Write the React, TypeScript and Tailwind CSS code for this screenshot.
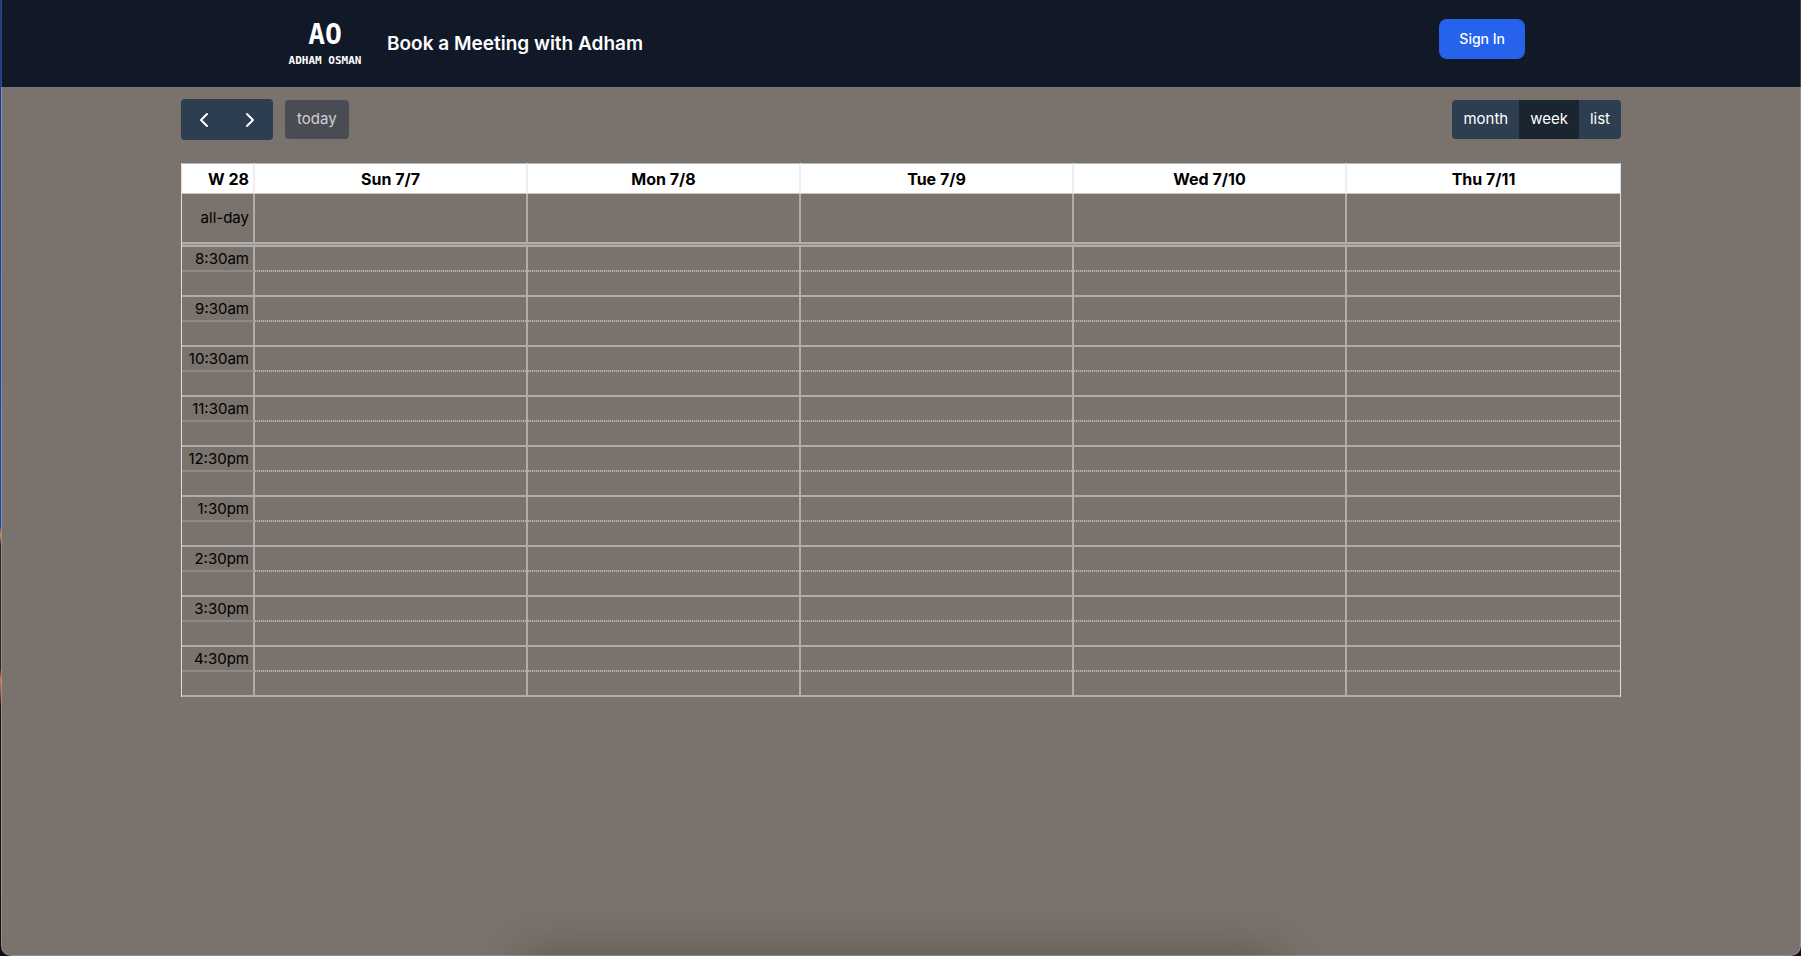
import { ChevronLeft, ChevronRight } from "lucide-react";

const days = ["Sun 7/7", "Mon 7/8", "Tue 7/9", "Wed 7/10", "Thu 7/11"];
const hours = [
  "8:30am",
  "9:30am",
  "10:30am",
  "11:30am",
  "12:30pm",
  "1:30pm",
  "2:30pm",
  "3:30pm",
  "4:30pm",
];

const dayCell = "border-r-2 border-[#b0acaa] p-0 last:border-r-0";

function Logo() {
  return (
    <a
      href="#home"
      className="flex w-[76px] flex-col items-center whitespace-nowrap font-['DejaVu_Sans_Mono',monospace] font-bold"
    >
      <span className="text-[28px] leading-[30px]">AO</span>
      <span className="mt-1 text-[11px] leading-[14px]">ADHAM OSMAN</span>
    </a>
  );
}

function Header() {
  return (
    <header className="bg-[#111827] text-white">
      <div className="mx-auto flex h-[87px] max-w-7xl items-center justify-between pl-[26px] pr-4">
        <div className="flex items-center gap-6">
          <Logo />
          <h1 className="text-[19px] font-semibold leading-7">Book a Meeting with Adham</h1>
        </div>
        <button
          type="button"
          className="mb-2.5 h-10 rounded-lg bg-[#2563eb] px-5 text-sm font-medium"
        >
          Sign In
        </button>
      </div>
    </header>
  );
}

function Toolbar() {
  return (
    <div className="flex items-center justify-between text-[15px] text-white">
      <div className="flex items-center gap-3">
        <div className="flex overflow-hidden rounded bg-[#2c3e50]">
          <button type="button" aria-label="Previous week" className="flex h-[41px] w-[46px] items-center justify-center">
            <ChevronLeft size={24} strokeWidth={2} />
          </button>
          <button type="button" aria-label="Next week" className="flex h-[41px] w-[46px] items-center justify-center">
            <ChevronRight size={24} strokeWidth={2} />
          </button>
        </div>
        <button type="button" disabled className="h-[39px] rounded bg-[#30384a] px-3 opacity-65">
          today
        </button>
      </div>
      <div className="flex overflow-hidden rounded bg-[#2c3e50]">
        <button type="button" className="h-[39px] px-[11px]">month</button>
        <button type="button" aria-pressed="true" className="h-[39px] bg-[#1a252f] px-[11px]">week</button>
        <button type="button" className="h-[39px] px-[11px]">list</button>
      </div>
    </div>
  );
}

function WeekGrid() {
  return (
    <table className="mt-[23px] w-full table-fixed border-separate border-spacing-0 border-x border-[#dddddd] text-[15px] text-black">
      <colgroup>
        <col className="w-[73px]" />
        {days.map((day) => (
          <col key={day} />
        ))}
      </colgroup>
      <thead className="text-base">
        <tr className="h-[31px] bg-white">
          <th className="border-y border-r-2 border-t-[#b9b6b4] border-b-[#c5c3c1] border-r-[#eeeeee] bg-white p-0 pr-1 text-right font-bold">
            W 28
          </th>
          {days.map((day) => (
            <th
              key={day}
              className="border-y border-r-2 border-t-[#b9b6b4] border-b-[#c5c3c1] border-r-[#eeeeee] bg-white p-0 text-center font-bold last:border-r-0"
            >
              {day}
            </th>
          ))}
        </tr>
      </thead>
      <tbody>
        <tr className="h-12">
          <th className="border-r-2 border-[#b0acaa] p-0 pr-1 text-right font-normal">all-day</th>
          {days.map((day) => (
            <td key={day} className={dayCell} />
          ))}
        </tr>
        <tr className="h-[5px]">
          <td colSpan={6} className="border-y-2 border-[#b0adaa] bg-[#938d89] p-0" />
        </tr>
      </tbody>
      {hours.map((hour) => (
        <tbody key={hour}>
          <tr className="h-[25px]">
            <th className="border-r-2 border-b-2 border-r-[#b0acaa] border-b-[#8f8985] p-0 pr-1 text-right font-normal leading-[23px]">
              {hour}
            </th>
            {days.map((day) => (
              <td
                key={day}
                className="border-r-2 border-[#b0acaa] bg-[repeating-linear-gradient(90deg,#b2aeab_0px,#b2aeab_1px,#8a847f_1px,#8a847f_2px)] bg-[length:100%_2px] bg-bottom bg-no-repeat p-0 last:border-r-0"
              />
            ))}
          </tr>
          <tr className="h-[25px]">
            <td className="border-r-2 border-b-2 border-[#b0acaa] p-0" />
            {days.map((day) => (
              <td key={day} className="border-r-2 border-b-2 border-[#b0acaa] p-0 last:border-r-0" />
            ))}
          </tr>
        </tbody>
      ))}
    </table>
  );
}

export default function App() {
  return (
    <div className="min-h-screen bg-[linear-gradient(180deg,#0a3cae_0%,#0a46c8_55%,#e0913a_56%,#3a1c1c_57%,#3a1c1c_70%,#e07838_71%,#c05a30_72%,#14141c_74%,#101018_100%)] pl-px font-['Inter',sans-serif] text-base">
      <div className="relative min-h-screen overflow-hidden rounded-b-[10px] bg-[#7a726c]">
        <Header />
        <main className="mx-auto w-4/5 pt-3">
          <Toolbar />
          <WeekGrid />
        </main>
        <div className="pointer-events-none absolute -bottom-10 left-[29%] right-[29%] h-10 rounded-3xl shadow-[0_0_40px_6px_rgba(60,60,50,0.4)]" />
        <div className="pointer-events-none absolute inset-0 rounded-b-[10px] border border-t-0 border-white/20" />
      </div>
    </div>
  );
}
